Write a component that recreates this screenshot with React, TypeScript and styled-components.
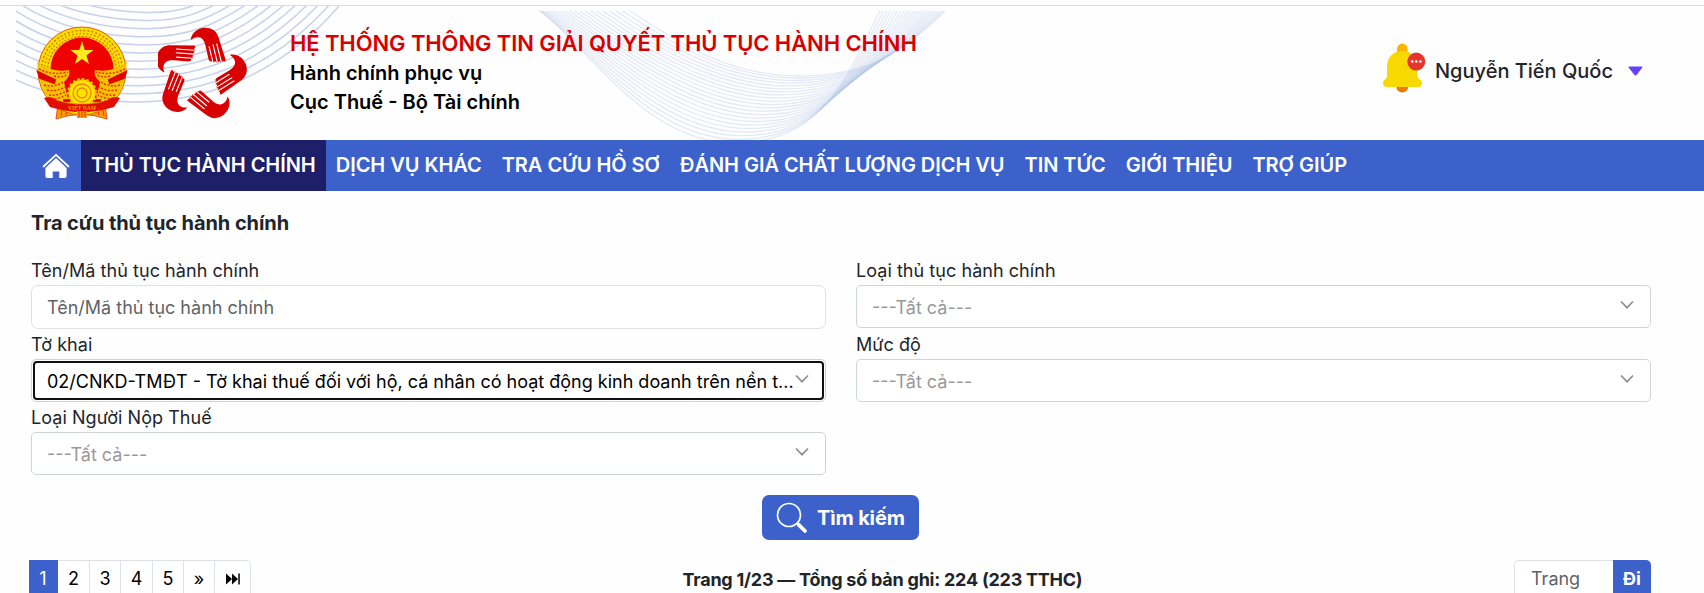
import React from 'react';
import styled, { createGlobalStyle } from 'styled-components';

const GlobalStyle = createGlobalStyle`
  * { box-sizing: border-box; }
  body {
    margin: 0;
    background: #fefefe;
    color: #212529;
    font-family: Inter, "Noto Sans", sans-serif;
    font-size: 18px;
    line-height: 27px;
    overflow: hidden;
  }
  button, input { font: inherit; }
`;

const Page = styled.div`
  height: 593px;
  overflow: hidden;
  padding-top: 5px;
`;

const Header = styled.header`
  position: relative;
  height: 135px;
  border-top: 1px solid #dcdcde;
  display: flex;
  align-items: flex-start;
  padding: 0 61px 0 36px;
`;

const Waves = styled.svg`
  position: absolute;
  left: 0;
  top: 0;
  pointer-events: none;
`;

const Logos = styled.div`
  position: relative;
  display: flex;
  gap: 30px;
  padding-top: 20px;
  width: 254px;
`;

const Titles = styled.div`
  position: relative;
  flex: 1;
  padding-top: 21px;
`;

const SystemName = styled.h1`
  margin: 0;
  font-size: 22px;
  line-height: 32px;
  font-weight: 600;
  letter-spacing: -0.105px;
  color: #d70000;
`;

const SubTitle = styled.div`
  font-size: 20px;
  line-height: 29px;
  font-weight: 600;
  color: #000;
`;

const UserBox = styled.div`
  display: flex;
  align-items: flex-start;
  padding-top: 37px;
`;

const UserName = styled.span`
  margin: 13px 15px 0 8px;
  font-size: 20px;
  line-height: 30px;
  font-weight: 500;
`;

const Caret = styled.svg`
  margin-top: 23px;
`;

const Nav = styled.nav`
  display: flex;
  height: 51px;
  background: #3c61cb;
  padding-left: 33px;
`;

const NavItem = styled.a<{ $active?: boolean }>`
  display: flex;
  align-items: center;
  padding: 0 10px;
  color: #fff;
  font-size: 20px;
  font-weight: 600;
  letter-spacing: -0.04px;
  white-space: nowrap;
  background: ${(p) => (p.$active ? '#1e1f69' : 'transparent')};
`;

const HomeLink = styled.a`
  display: flex;
  width: 48px;
  padding: 12px 0 0 9px;
`;

const Content = styled.main`
  padding: 17px 53px 0 31px;
`;

const Heading = styled.h2`
  margin: 0 0 20px;
  font-size: 20px;
  line-height: 30px;
  font-weight: 700;
  letter-spacing: -0.08px;
`;

const FormGrid = styled.form`
  display: grid;
  grid-template-columns: 795px 795px;
  column-gap: 30px;
  row-gap: 3px;
  align-items: start;
`;

const Field = styled.label`
  display: block;
`;

const FieldLabel = styled.span`
  display: block;
  height: 27px;
  line-height: 25px;
  letter-spacing: 0.05px;
`;

const TextInput = styled.input`
  display: block;
  width: 100%;
  height: 44px;
  padding: 0 15px;
  border: 1px solid #dee2e6;
  border-radius: 7px;
  background: #fff;
  outline: none;
  &::placeholder { color: #5f6368; opacity: 1; }
`;

const SelectBox = styled.div<{ $focused?: boolean }>`
  display: flex;
  align-items: center;
  height: 43px;
  padding: ${(p) => (p.$focused ? '1px' : '0')};
  border: 1px solid #ced4da;
  border-radius: 5px;
  background: #fff;
`;

const SelectInner = styled.div<{ $focused?: boolean }>`
  display: flex;
  align-items: center;
  flex: 1;
  min-width: 0;
  height: 39px;
  padding: ${(p) => (p.$focused ? '0 13px 0 12px' : '0 16px 0 15px')};
  border: ${(p) => (p.$focused ? '2px solid #101010' : '0')};
  border-radius: 4px;
  color: ${(p) => (p.$focused ? '#000' : '#999')};
`;

const SelectValue = styled.span`
  flex: 1;
  min-width: 0;
  white-space: nowrap;
  padding-top: 1px;
`;

const Chevron = styled.svg`
  flex: none;
  margin-bottom: 3px;
`;

const Actions = styled.div`
  display: flex;
  justify-content: center;
  padding: 20px 1px 20px 0;
`;

const SearchButton = styled.button`
  display: flex;
  align-items: center;
  width: 157px;
  height: 45px;
  padding: 1px 0 0 14px;
  border: 0;
  border-radius: 7px;
  background: #3c61cb;
  color: #fff;
  font-size: 20px;
  font-weight: 700;
  letter-spacing: -0.15px;
  gap: 9px;
`;

const Footer = styled.div`
  display: flex;
  justify-content: space-between;
  margin-left: -2px;
`;

const Pager = styled.div`
  display: flex;
  height: 37px;
`;

const PageButton = styled.button<{ $width: number; $active?: boolean; $last?: boolean }>`
  width: ${(p) => p.$width}px;
  padding: 0;
  border: 1px solid #dee2e6;
  border-left: 0;
  border-color: ${(p) => (p.$active ? '#3c61cb' : '#dfe1e8')};
  border-top-right-radius: ${(p) => (p.$last ? '5px' : '0')};
  background: ${(p) => (p.$active ? '#3c61cb' : '#fff')};
  color: ${(p) => (p.$active ? '#fff' : '#000')};
`;

const Summary = styled.div`
  font-weight: 700;
  letter-spacing: -0.24px;
  padding-top: 6px;
`;

const Jump = styled.div`
  display: flex;
`;

const JumpInput = styled.input`
  width: 99px;
  height: 37px;
  padding: 0 0 0 16px;
  border: 1px solid #dee2e6;
  border-right: 0;
  border-radius: 5px 0 0 5px;
  background: #fff;
  &::placeholder { color: #5f6368; opacity: 1; }
`;

const JumpButton = styled.button`
  width: 38px;
  height: 37px;
  padding: 0;
  border: 0;
  border-radius: 0 5px 5px 0;
  background: #3c61cb;
  color: #fff;
  font-weight: 700;
`;

const lerp = (a: number[], b: number[], t: number) => a.map((v, i) => v + (b[i] - v) * t);
const toPath = (p: number[]) =>
  `M${p[0]} ${p[1]}C${p[2]} ${p[3]} ${p[4]} ${p[5]} ${p[6]} ${p[7]}S${p[8]} ${p[9]} ${p[10]} ${p[11]}`;

const arcInner = [16, -38, 55, -8, 100, 2, 140, 4, 190, 0, 235, -22];
const arcOuter = [16, 80, 50, 96, 92, 102, 135, 102, 265, 92, 339, 6];
const ribbonOuter = [540, 11, 590, 48, 645, 143, 735, 143, 850, 70, 880, 11];
const ribbonInner = [630, 11, 680, 44, 730, 76, 798, 76, 900, 55, 945, 11];

// The strands bunch up towards the lower edge at the left and the upper edge at the right.
const strand = (t: number) => {
  const left = lerp(ribbonInner, ribbonOuter, 1 - Math.pow(1 - t, 1.7));
  const right = lerp(ribbonInner, ribbonOuter, Math.pow(t, 1.15));
  return toPath([...left.slice(0, 4), ...right.slice(4)]);
};

const HeaderWaves = () => (
  <Waves width="1000" height="134" viewBox="0 6 1000 134" fill="none">
    <clipPath id="arcClip"><rect x="16" y="6" width="330" height="120" /></clipPath>
    <g clipPath="url(#arcClip)" stroke="#c6d2ea" strokeWidth="1.5">
      {Array.from({ length: 13 }, (_, i) => (
        <path key={i} d={toPath(lerp(arcInner, arcOuter, i / 12))} />
      ))}
    </g>
    <g stroke="#b4c5e6" strokeWidth="1.3" strokeOpacity="0.36">
      {Array.from({ length: 22 }, (_, i) => (
        <path key={i} d={strand(i / 21)} />
      ))}
    </g>
  </Waves>
);

const Emblem = () => (
  <svg width="92" height="94" viewBox="0 0 92 94">
    <path d="M23 70 20 93Q45 84 71 93L68 70Z" fill="#f5a000" stroke="#e33000" strokeWidth=".8" />
    <path d="M27 77l-2 13m7-11-2 10m31-10 2 10m2-12 3 13" stroke="#e33000" strokeWidth="1" />
    <circle cx="46" cy="45" r="44" fill="#f7df00" stroke="#ed5a00" strokeWidth="1" />
    <circle cx="46" cy="45" r="40.5" fill="none" stroke="#dc7800" strokeWidth="1.5" strokeDasharray="2 2" />
    <circle cx="46" cy="45" r="37.5" fill="none" stroke="#ec7200" strokeWidth="1.4" strokeDasharray="1.5 2.2" />
    <circle cx="46" cy="45" r="34.5" fill="none" stroke="#e87400" strokeWidth="1.4" strokeDasharray="2 1.6" />
    <circle cx="46" cy="43" r="31.5" fill="#f20000" />
    <path d="M27 60H65V76H27Z" fill="#f20000" />
    <path d="M1 36Q14 47 33 44Q35 50 28 56L32 73 14 74Q3 60 1 36Z" fill="#f3c300" />
    <path d="M91 36Q78 47 59 44Q57 50 64 56L60 73 78 74Q89 60 91 36Z" fill="#f3c300" />
    <g fill="none" stroke="#ed2a00" strokeWidth="1.5" strokeDasharray="2 1.6">
      <path d="M3 43q14 7 29 3M18 50q7 2 13-1M8 59q10 3 19-3M11 64q9 2 18-3M13 69q9 1 17-4M15 73q8 0 15-4" />
      <path d="M89 43q-14 7-29 3M74 50q-7 2-13-1M84 59q-10 3-19-3M81 64q-9 2-18-3M79 69q-9 1-17-4M77 73q-8 0-15-4" />
    </g>
    <path d="M2 46 19 54 18 57 4 52ZM90 46 73 54 74 57 88 52Z" fill="#e00000" stroke="#e00000" strokeWidth="2" />
    <path d="M46 15 48.7 24H57.5L50.5 29.5 53 38 46 33 39 38 41.5 29.5 34.5 24H43.3Z" fill="#ffeb1c" />
    <circle cx="46" cy="67" r="13.5" fill="#ffe500" stroke="#f4c800" strokeWidth="3" strokeDasharray="2.5 2" />
    <circle cx="46" cy="67" r="9" fill="none" stroke="#f08400" strokeWidth="1.3" />
    <circle cx="46" cy="67" r="5" fill="none" stroke="#f08400" strokeWidth="1.3" />
    <path d="M8 72Q15 69 20 74Q46 82 72 74Q77 69 84 72L78 81Q46 91 14 81Z" fill="#e30c00" />
    <path d="M27 76Q46 80 65 76" fill="none" stroke="#f5a000" strokeWidth="1" strokeDasharray="1.5 .8" />
    <text x="46" y="84" textAnchor="middle" fontFamily="Liberation Serif, serif" fontSize="5.5" fontWeight="700" fill="#ff9d00">VIỆT NAM</text>
    <path d="M41 85H51V92H41Z" fill="#f5a000" />
    <path d="M43 85v6m3-6v6m3-6v6" stroke="#e33000" strokeWidth="1" />
  </svg>
);

const TaxLogo = () => (
  <svg width="92" height="94" viewBox="24 17 276 282">
    {[0, 72, 144, 216, 288].map((a) => (
      <g key={a} transform={`rotate(${a} 150 162)`}>
        <path
          d="M122 59C124 38 142 23 164 22C187 21 201 34 206 52L227 119Q226 127 219 121Q214 129 208 123Q202 130 196 123Q190 129 184 123Q178 125 176 118L166 74C160 50 143 42 122 59Z"
          fill="#d80000"
        />
        <path d="M177 78 189 126M189 73 202 126M200 70 214 125" stroke="#fff" strokeWidth="3.4" fill="none" />
      </g>
    ))}
  </svg>
);

const Bell = () => (
  <svg width="44" height="51" viewBox="0 0 44 51">
    <circle cx="19.3" cy="5.6" r="5.2" fill="#fdb400" />
    <path d="M14.1 6H24.5V12H14.1Z" fill="#fdb400" />
    <circle cx="19.3" cy="43.6" r="6" fill="#eb7a00" />
    <path d="M4 24C4 14 10.5 8 19.3 8S34.5 14 34.5 24V34C34.5 36 39 36.5 39 40Q39 44 35 44H4Q0 44 0 40C0 36.5 4 36 4 34Z" fill="#f7d800" />
    <circle cx="33.3" cy="18.6" r="9" fill="#e5352d" />
    <g fill="#fff"><circle cx="29.2" cy="18.5" r="1.3" /><circle cx="33.3" cy="18.5" r="1.3" /><circle cx="37.4" cy="18.5" r="1.3" /></g>
  </svg>
);

type SelectProps = { label: string; value?: string; focused?: boolean };
const Select = ({ label, value = '---Tất cả---', focused }: SelectProps) => (
  <Field as="div">
    <FieldLabel>{label}</FieldLabel>
    <SelectBox $focused={focused}>
      <SelectInner $focused={focused}>
        <SelectValue>{value}</SelectValue>
        <Chevron width="14" height="10" viewBox="0 0 14 10">
          <path d="M1 1.5 7 7.7 13 1.5" fill="none" stroke="#909090" strokeWidth="1.7" />
        </Chevron>
      </SelectInner>
    </SelectBox>
  </Field>
);

const menu = ['THỦ TỤC HÀNH CHÍNH', 'DỊCH VỤ KHÁC', 'TRA CỨU HỒ SƠ', 'ĐÁNH GIÁ CHẤT LƯỢNG DỊCH VỤ', 'TIN TỨC', 'GIỚI THIỆU', 'TRỢ GIÚP'];

const pages: [React.ReactNode, number][] = [
  ['1', 29], ['2', 32], ['3', 31], ['4', 32], ['5', 31], ['»', 31],
];

export default function App() {
  return (
    <Page>
      <GlobalStyle />
      <Header>
        <HeaderWaves />
        <Logos>
          <Emblem />
          <TaxLogo />
        </Logos>
        <Titles>
          <SystemName>HỆ THỐNG THÔNG TIN GIẢI QUYẾT THỦ TỤC HÀNH CHÍNH</SystemName>
          <SubTitle>Hành chính phục vụ</SubTitle>
          <SubTitle>Cục Thuế - Bộ Tài chính</SubTitle>
        </Titles>
        <UserBox>
          <Bell />
          <UserName>Nguyễn Tiến Quốc</UserName>
          <Caret width="15" height="10" viewBox="0 0 15 10"><path d="M.8 1H14.2L8.5 8.5Q7.5 9.5 6.5 8.5Z" fill="#6640ff" stroke="#6640ff" strokeLinejoin="round" /></Caret>
        </UserBox>
      </Header>
      <Nav>
        <HomeLink>
          <svg width="28" height="28" viewBox="0 0 28 28">
            <path d="M1.5 14.5 14 2.8 26.5 14.5" fill="none" stroke="#fff" strokeWidth="1.8" strokeLinecap="round" strokeLinejoin="round" />
            <path d="M14 6 24.6 16V24.2Q24.6 26 22.8 26H17.3V19.5H10.7V26H5.2Q3.4 26 3.4 24.2V16Z" fill="#fff" />
          </svg>
        </HomeLink>
        {menu.map((m, i) => <NavItem key={m} $active={i === 0}>{m}</NavItem>)}
      </Nav>
      <Content>
        <Heading>Tra cứu thủ tục hành chính</Heading>
        <FormGrid>
          <Field>
            <FieldLabel>Tên/Mã thủ tục hành chính</FieldLabel>
            <TextInput placeholder="Tên/Mã thủ tục hành chính" />
          </Field>
          <Select label="Loại thủ tục hành chính" />
          <Select
            focused
            label="Tờ khai"
            value="02/CNKD-TMĐT - Tờ khai thuế đối với hộ, cá nhân có hoạt động kinh doanh trên nền t..."
          />
          <Select label="Mức độ" />
          <Select label="Loại Người Nộp Thuế" />
        </FormGrid>
        <Actions>
          <SearchButton>
            <svg width="32" height="32" viewBox="0 0 32 32">
              <circle cx="13" cy="13" r="11.5" fill="none" stroke="#fff" strokeWidth="1.7" />
              <path d="M21.3 21.3 23 23" stroke="#fff" strokeWidth="2" />
              <path d="M22.8 22.8 29 29" stroke="#fff" strokeWidth="3.8" strokeLinecap="round" />
            </svg>
            Tìm kiếm
          </SearchButton>
        </Actions>
        <Footer>
          <Pager>
            {pages.map(([p, w], i) => <PageButton key={i} $width={w} $active={i === 0}>{p}</PageButton>)}
            <PageButton $width={36} $last aria-label="Trang cuối">
              <svg width="14" height="12" viewBox="0 0 14 12"><path d="M0 .5 6 6 0 11.5ZM6 .5 12 6 6 11.5ZM12.3 .5H13.8V11.5H12.3Z" fill="#000" /></svg>
            </PageButton>
          </Pager>
          <Summary>Trang 1/23 — Tổng số bản ghi: 224 (223 TTHC)</Summary>
          <Jump>
            <JumpInput placeholder="Trang" />
            <JumpButton>Đi</JumpButton>
          </Jump>
        </Footer>
      </Content>
    </Page>
  );
}
